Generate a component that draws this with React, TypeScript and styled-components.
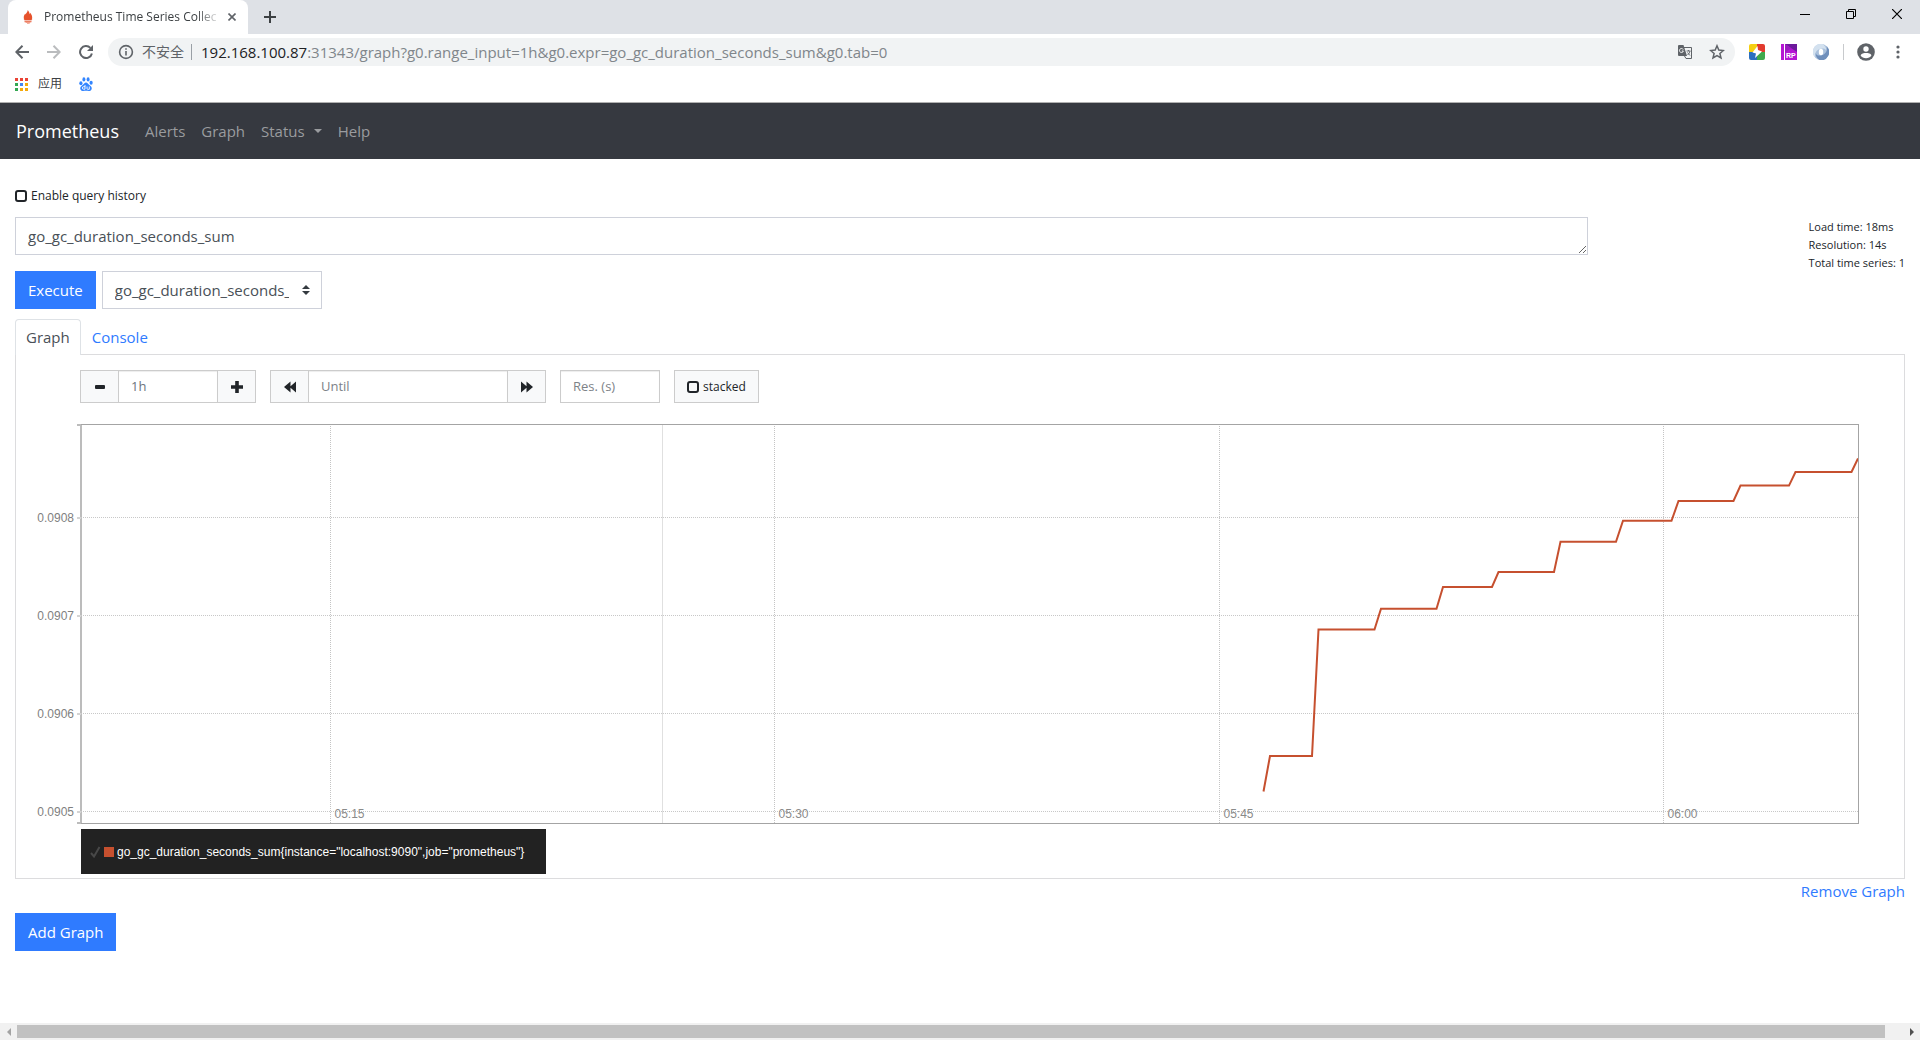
import React, { useState } from "react";
import styled, { createGlobalStyle } from "styled-components";

const ui = '"Open Sans", "Noto Sans CJK SC", sans-serif';
const arial = '"Liberation Sans", Arial, sans-serif';
const blue = "#2f7bff";
const ink = "#212529";
const chromeGrey = "#5f6368";

const GlobalStyle = createGlobalStyle`
  *, *::before, *::after { box-sizing: border-box; }
  body { margin: 0; background: #fff; color: ${ink}; font: 15px/24px ${ui}; }
  button, input, select, textarea { font: inherit; color: inherit; margin: 0; }
  svg { display: block; flex: none; }
  a { text-decoration: none; }
`;

const Window = styled.div`
  display: flex;
  flex-direction: column;
  min-height: 100vh;
`;

/* ---------- browser frame ---------- */

const TabStrip = styled.div`
  display: flex;
  align-items: stretch;
  height: 34px;
  padding-left: 8px;
  background: #dee1e6;
`;

const BrowserTab = styled.div`
  display: flex;
  align-items: center;
  width: 240px;
  padding: 0 8px 0 12px;
  background: #fff;
  border-radius: 8px 8px 0 0;
`;

const TabTitle = styled.span`
  flex: 1;
  margin-left: 8px;
  overflow: hidden;
  white-space: nowrap;
  font-size: 12px;
  line-height: 18px;
  color: #3c4043;
  mask-image: linear-gradient(to right, #000 85%, transparent 98%);
`;

const IconButton = styled.button<{ $w?: number; $color?: string }>`
  display: flex;
  align-items: center;
  justify-content: center;
  flex: none;
  width: ${(p) => p.$w ?? 32}px;
  padding: 0;
  border: 0;
  background: none;
  color: ${(p) => p.$color ?? chromeGrey};
`;

const NewTab = styled(IconButton)`
  margin-left: 6px;
`;

const WindowControls = styled.div`
  display: flex;
  height: 28px;
  margin-left: auto;
`;

const Toolbar = styled.div`
  display: flex;
  align-items: center;
  height: 36px;
  padding: 0 12px 0 6px;
`;

const Omnibox = styled.div`
  display: flex;
  align-items: center;
  flex: 1;
  height: 28px;
  margin: 0 6px;
  padding: 0 2px 0 10px;
  border-radius: 14px;
  background: #f1f3f4;
  font-size: 14px;
  line-height: 20px;
  color: #80868b;
`;

const Insecure = styled.span`
  margin: 0 7px 0 8px;
  color: ${chromeGrey};
`;

const Url = styled.div`
  flex: 1;
  padding-left: 9px;
  outline: 0;
  white-space: nowrap;
  overflow: hidden;
  font-size: 15px;
`;

const Host = styled.span`
  color: #202124;
`;

const VRule = styled.span<{ $color: string }>`
  width: 1px;
  height: 16px;
  background: ${(p) => p.$color};
`;

const Extensions = styled.div`
  display: flex;
  margin-right: 6px;
`;

const Bookmarks = styled.div`
  display: flex;
  align-items: center;
  gap: 17px;
  height: 33px;
  padding: 0 15px 4px;
  border-bottom: 1px solid #b0b0b0;
  font-size: 12px;
  line-height: 18px;
`;

const Bookmark = styled.a`
  display: flex;
  align-items: center;
  gap: 10px;
  color: #3c4043;
`;

/* ---------- page ---------- */

const Navbar = styled.nav`
  display: flex;
  align-items: center;
  gap: 16px;
  height: 56px;
  padding: 0 16px;
  background: #363940;
`;

const Brand = styled.a`
  margin-right: 10px;
  color: #fff;
  font-size: 18px;
  line-height: 30px;
`;

const NavLink = styled.a`
  display: flex;
  align-items: center;
  gap: 9px;
  color: #9a9c9f;
`;

const Caret = styled.span`
  border: 4px solid transparent;
  border-top-color: currentColor;
  border-bottom: 0;
`;

const Main = styled.main`
  flex: 1;
  padding: 28px 15px 32px;
`;

const CheckLabel = styled.label`
  display: flex;
  align-items: center;
  gap: 4px;
  font-size: 12px;
  line-height: 18px;
`;

const CheckBox = styled.input`
  appearance: none;
  width: 12px;
  height: 12px;
  border: 2px solid ${ink};
  border-radius: 3px;
  &:checked { background: ${ink}; }
`;

const QueryRow = styled.div`
  display: grid;
  grid-template-columns: 5fr 1fr;
  gap: 2px;
  margin-top: 12px;
`;

const QueryForm = styled.form`
  display: flex;
  flex-direction: column;
  gap: 16px;
`;

const Expression = styled.textarea`
  display: block;
  width: 100%;
  height: 38px;
  padding: 6px 12px;
  border: 1px solid #ced1da;
  background: #fff;
  color: #495057;
  resize: vertical;
  overflow: hidden;
`;

const Actions = styled.div`
  display: flex;
  gap: 6px;
`;

const PrimaryButton = styled.button`
  height: 38px;
  padding: 0 13px;
  border: 0;
  background: ${blue};
  color: #fff;
`;

const SelectBox = styled.div`
  display: grid;
  align-items: center;
  width: 220px;
  > * { grid-area: 1 / 1; }
  > svg { justify-self: end; margin-right: 12px; pointer-events: none; }
`;

const Select = styled.select`
  appearance: none;
  width: 100%;
  height: 38px;
  padding: 0 32px 0 12px;
  border: 1px solid #ced1da;
  border-radius: 0;
  background: #fff;
  color: #495057;
`;

const Stats = styled.div`
  justify-self: end;
  padding-top: 1px;
  font-size: 11px;
  line-height: 18px;
`;

const Tabs = styled.div`
  display: flex;
  margin-top: 10px;
`;

const Tab = styled.button<{ $active?: boolean }>`
  position: relative;
  height: 36px;
  margin-bottom: -1px;
  padding: 0 10px 2px;
  border: 1px solid ${(p) => (p.$active ? "#dee2e6" : "transparent")};
  border-bottom: 0;
  border-radius: 4px 4px 0 0;
  background: ${(p) => (p.$active ? "#fff" : "none")};
  color: ${(p) => (p.$active ? "#495057" : blue)};
`;

const Panel = styled.section`
  padding: 15px 45px 4px 0;
  border: 1px solid #dcdcde;
`;

const Controls = styled.div`
  display: flex;
  gap: 14px;
  margin-left: 64px;
`;

const GroupButton = styled.button`
  display: flex;
  align-items: center;
  justify-content: center;
  width: 39px;
  border: 1px solid #ccc;
  background: #f8f9fa;
`;

const Field = styled.input<{ $w: number }>`
  width: ${(p) => p.$w}px;
  height: 33px;
  padding: 0 12px 2px;
  border: 1px solid #ccc;
  box-shadow: inset 0 1px 1px rgba(0, 0, 0, 0.075);
  background: #fff;
  font-size: 13px;
  color: #6c757d;
  &::placeholder { color: #7d8287; }
`;

const Group = styled.div`
  display: flex;
  height: 33px;
  ${Field} { margin: 0 -1px; }
`;

const Stacked = styled(CheckLabel)`
  height: 33px;
  padding: 0 12px;
  border: 1px solid #ccc;
  background: #f8f9fa;
`;

const Chart = styled.div`
  display: grid;
  grid-template-columns: 65px 1fr;
  margin-top: 21px;
`;

const YAxis = styled.svg`
  width: 65px;
  height: 400px;
  overflow: visible;
  font: 12px ${arial};
  fill: #7f7f7f;
`;

const Plot = styled.svg`
  width: 100%;
  height: 400px;
  font: 12px ${arial};
  fill: #8a8a8a;
`;

const Legend = styled.div`
  display: inline-flex;
  align-items: center;
  height: 45px;
  margin: 5px 0 0 65px;
  padding: 0 22px 0 9px;
  background: #222;
  color: #fff;
  font: 12px/18px ${arial};
`;

const Swatch = styled.span`
  width: 10px;
  height: 10px;
  margin: 0 3px;
  background: #c6502f;
`;

const RemoveRow = styled.div`
  display: flex;
  justify-content: flex-end;
  margin-bottom: 10px;
`;

const Link = styled.a`
  color: ${blue};
`;

const ScrollBar = styled.div`
  display: flex;
  align-items: center;
  height: 17px;
  background: #f1f1f1;
`;

const Thumb = styled.div`
  flex: 1;
  height: 13px;
  margin-right: 18px;
  background: #c1c1c1;
`;

/* ---------- data ---------- */

const yTicks = [
  { label: "0.0908", y: 93.5 },
  { label: "0.0907", y: 191.5 },
  { label: "0.0906", y: 289.5 },
  { label: "0.0905", y: 387.5 },
];

const xTicks = [
  { label: "05:15", at: 249.5 },
  { label: "05:30", at: 693.5 },
  { label: "05:45", at: 1138.5 },
  { label: "06:00", at: 1582.5 },
];

const PLOT_W = 1778;
const pct = (x: number) => `${(x / PLOT_W) * 100}%`;

const series: [number, number][] = [
  [1182.5, 367.5], [1189, 332], [1231, 332], [1237.5, 205.5], [1293.5, 205.5],
  [1300, 184.8], [1355.5, 184.8], [1362, 163], [1411, 163], [1417.5, 148],
  [1473, 148], [1479.5, 117.8], [1535, 117.8], [1542, 96.8], [1590.5, 96.8],
  [1597.5, 77], [1652.5, 77], [1659.5, 61.6], [1708, 61.6], [1714.5, 48],
  [1770.5, 48], [1777, 34.5],
];

/* ---------- icons ---------- */

const stroke = { fill: "none", stroke: "currentColor" };

const Flame = () => (
  <svg width="16" height="16" viewBox="0 0 16 16" fill="#e6522c">
    <path d="M7.800 1c.8 1.400 1.900 2.500 1.700 4.200.5-.4.600-1 .6-1.500 1.300 1.700 2.700 3.900 1.900 6L11.200 11H4.800L4 9.700c-.7-1.800.1-3.700 1.300-5.200 0 .5.200.8.500 1.100C5.800 4 7.800 3 7.800 1z" />
    <path d="M3.500 9.800h9l-1 1.800h-7zM4.500 12h7v1.300h-7zM5.500 13.600h5c-.6 1.600-4.400 1.600-5 0z" opacity=".75" />
  </svg>
);

const Apps = () => (
  <svg width="13" height="13" viewBox="0 0 13 13">
    {["#ea4335", "#ea4335", "#ea4335", "#34a853", "#4285f4", "#f4a90b", "#34a853", "#f4a90b", "#f4a90b"].map((c, i) => (
      <rect key={i} x={(i % 3) * 5} y={Math.floor(i / 3) * 5} width="3" height="3" fill={c} />
    ))}
  </svg>
);

const Paw = () => (
  <svg width="14" height="14" viewBox="0 0 14 14" fill="#3385ff">
    <ellipse cx="1.900" cy="6.200" rx="1.600" ry="2" />
    <ellipse cx="4.900" cy="2.400" rx="1.500" ry="2.100" />
    <ellipse cx="9.100" cy="2.400" rx="1.500" ry="2.100" />
    <ellipse cx="12.100" cy="5.700" rx="1.600" ry="2" />
    <path d="M7 5.500c1.500 0 2.200 1.500 3.400 2.600 1.500 1.300 2.800 2.200 2.200 4.100-.7 2.300-3.300 1.600-5.600 1.600s-4.900.7-5.600-1.600C.8 10.300 2.100 9.400 3.600 8.100 4.800 7 5.500 5.500 7 5.500z" />
    <path d="M6 8v4.200H4.600a1.200 1.200 0 0 1 0-2.500H6M8 9.500v2q0 .8.800.8h1.500V9.500" fill="none" stroke="#fff" strokeWidth=".9" />
  </svg>
);

const Translate = () => (
  <svg width="14" height="14" viewBox="0 0 14 14">
    <path d="M6 2.500h7.500v11H8L6.500 11" fill="#f1f3f4" stroke={chromeGrey} />
    <path d="M0 1q0-1 1-1h4.500L9 11H1q-1 0-1-1z" fill={chromeGrey} />
    <path d="M5.200 4.500A2 2 0 1 0 5.400 6H3.800" fill="none" stroke="#fff" strokeWidth=".9" />
    <path d="M8.500 6h4M10.500 5v1M12 6q-.5 2.500-2.500 4M9.500 7.500l2.500 3" fill="none" stroke={chromeGrey} strokeWidth=".9" />
  </svg>
);

const Star = () => (
  <svg width="16" height="16" viewBox="0 0 16 16" {...stroke} strokeWidth="1.500">
    <path d="M8 1.800l1.800 4.300 4.600.4-3.500 3 1.100 4.500L8 11.600 4 14l1.100-4.500-3.500-3 4.600-.4z" />
  </svg>
);

const Bolt = () => (
  <svg width="16" height="16" viewBox="0 0 16 16">
    <path d="M2 0h6v8H0V2q0-2 2-2z" fill="#f5cf12" />
    <path d="M8 0h6q2 0 2 2v6H8z" fill="#e23b2e" />
    <path d="M0 8h8v8H2q-2 0-2-2z" fill="#2b6fbf" />
    <path d="M8 8h8v6q0 2-2 2H8z" fill="#3fa94d" />
    <path d="M8.500 2L3.500 8.500l3.500 1L6 14l7-6.500-4-1.500z" fill="#fff" />
  </svg>
);

const Axure = () => (
  <svg width="16" height="16" viewBox="0 0 16 16">
    <path d="M0 0h16v16H0z" fill="#b515d3" />
    <path d="M4 0h12v8L10 4z" fill="#6d1a9c" />
    <path d="M4 0l6 4-6 5z" fill="#9a1bc0" />
    <path d="M3 0h1v16H3z" fill="#fff" />
    <text x="5" y="14" fontSize="7" fontWeight="700" fontFamily={arial} fill="#fff">RP</text>
  </svg>
);

const Swirl = () => (
  <svg width="16" height="16" viewBox="0 0 16 16">
    <circle cx="8" cy="8" r="8" fill="#a9c0dc" />
    <path d="M9.500 0A8 8 0 0 0 2.500 13.800C.8 8.500 4.500 3.800 11 4.500 12.500 5 13 6 13.300 7 13.500 4 12 1.500 9.500 0z" fill="#d3e1ef" />
    <path d="M6.500 16A8 8 0 0 0 13.500 2.200C15.200 7.500 11.500 12.200 5 11.500 3.500 11 3 10 2.700 9 2.500 12 4 14.500 6.500 16z" fill="#6f8fbb" />
    <ellipse cx="8" cy="8" rx="2.200" ry="3.200" fill="#fff" />
  </svg>
);

const Person = () => (
  <svg width="18" height="18" viewBox="0 0 18 18">
    <circle cx="9" cy="9" r="8.800" fill={chromeGrey} />
    <circle cx="9" cy="6" r="2.700" fill="#fff" />
    <path d="M3.600 12.500C4 10.600 7 10 9 10s5 .6 5.400 2.500C13.200 14.300 11.300 15.200 9 15.200s-4.200-.9-5.400-2.700z" fill="#fff" />
  </svg>
);

const Rewind = ({ flip }: { flip?: boolean }) => (
  <svg width="12" height="12" viewBox="0 0 12 12" fill="currentColor">
    <path d={flip ? "M0 .5v11L5.500 6.800v4.700L12 6 5.500.5v4.700z" : "M12 .5v11L6.500 6.800v4.700L0 6 6.500.5v4.700z"} />
  </svg>
);

/* ---------- app ---------- */

export default function App() {
  const [expr, setExpr] = useState("go_gc_duration_seconds_sum");
  return (
    <Window>
      <GlobalStyle />
      <header>
        <TabStrip>
          <BrowserTab>
            <Flame />
            <TabTitle>Prometheus Time Series Collec</TabTitle>
            <IconButton $w={16} aria-label="Close tab">
              <svg width="8" height="8" viewBox="0 0 8 8" {...stroke} strokeWidth="1.600"><path d="M.5.5l7 7m0-7l-7 7" /></svg>
            </IconButton>
          </BrowserTab>
          <NewTab aria-label="New tab" $color="#3c4043">
            <svg width="12" height="12" viewBox="0 0 12 12" {...stroke} strokeWidth="2"><path d="M6 0v12M0 6h12" /></svg>
          </NewTab>
          <WindowControls>
            <IconButton $w={46} $color="#000" aria-label="Minimize">
              <svg width="10" height="10" {...stroke}><path d="M0 5.500h10" /></svg>
            </IconButton>
            <IconButton $w={46} $color="#000" aria-label="Restore">
              <svg width="10" height="10" {...stroke}><path d="M.5 2.500h7v7h-7zM2.500 2.500v-2h7v7h-2" /></svg>
            </IconButton>
            <IconButton $w={46} $color="#000" aria-label="Close">
              <svg width="10" height="10" {...stroke} strokeWidth="1.200"><path d="M0 0l10 10M10 0L0 10" /></svg>
            </IconButton>
          </WindowControls>
        </TabStrip>
        <Toolbar>
          <IconButton aria-label="Back">
            <svg width="14" height="14" viewBox="0 0 14 14" {...stroke} strokeWidth="2"><path d="M14 7H1.500M7.500.8L1.300 7l6.200 6.200" /></svg>
          </IconButton>
          <IconButton aria-label="Forward" $color="#babcbe">
            <svg width="14" height="14" viewBox="0 0 14 14" {...stroke} strokeWidth="2"><path d="M0 7h12.500M6.500.8L12.700 7l-6.200 6.200" /></svg>
          </IconButton>
          <IconButton aria-label="Reload">
            <svg width="14" height="14" viewBox="0 0 14 14">
              <path d="M12.900 8.500A6 6 0 1 1 11.400 2.900" {...stroke} strokeWidth="2" />
              <path d="M14 0v6H8z" fill="currentColor" />
            </svg>
          </IconButton>
          <Omnibox>
            <svg width="16" height="16" viewBox="0 0 16 16" fill="none" stroke={chromeGrey} strokeWidth="1.600">
              <circle cx="8" cy="8" r="6.400" /><path d="M8 7v4.500M8 4.200v1.600" />
            </svg>
            <Insecure>不安全</Insecure>
            <VRule $color="#9aa0a6" />
            <Url role="textbox" aria-label="Address" contentEditable suppressContentEditableWarning spellCheck={false}>
              <Host>192.168.100.87</Host>:31343/graph?g0.range_input=1h&amp;g0.expr=go_gc_duration_seconds_sum&amp;g0.tab=0
            </Url>
            <IconButton aria-label="Translate"><Translate /></IconButton>
            <IconButton aria-label="Bookmark"><Star /></IconButton>
          </Omnibox>
          <Extensions>
            <IconButton aria-label="Bolt extension"><Bolt /></IconButton>
            <IconButton aria-label="Axure RP"><Axure /></IconButton>
            <IconButton aria-label="Formatter"><Swirl /></IconButton>
          </Extensions>
          <VRule $color="#c8cacd" />
          <IconButton $w={44} aria-label="Profile"><Person /></IconButton>
          <IconButton $w={20} aria-label="Menu">
            <svg width="4" height="14" viewBox="0 0 4 14" fill="currentColor"><circle cx="2" cy="2" r="1.600" /><circle cx="2" cy="7" r="1.600" /><circle cx="2" cy="12" r="1.600" /></svg>
          </IconButton>
        </Toolbar>
        <Bookmarks>
          <Bookmark href="#apps"><Apps />应用</Bookmark>
          <Bookmark href="#baidu" aria-label="Baidu"><Paw /></Bookmark>
        </Bookmarks>
      </header>

      <Navbar>
        <Brand href="#home">Prometheus</Brand>
        <NavLink href="#alerts">Alerts</NavLink>
        <NavLink href="#graph">Graph</NavLink>
        <NavLink href="#status">Status<Caret /></NavLink>
        <NavLink href="#help">Help</NavLink>
      </Navbar>

      <Main>
        <CheckLabel>
          <CheckBox type="checkbox" />Enable query history
        </CheckLabel>
        <QueryRow>
          <QueryForm onSubmit={(e) => e.preventDefault()}>
            <Expression aria-label="Expression" rows={1} spellCheck={false} value={expr} onChange={(e) => setExpr(e.target.value)} />
            <Actions>
              <PrimaryButton type="submit">Execute</PrimaryButton>
              <SelectBox>
                <Select aria-label="Metric" defaultValue="go_gc_duration_seconds_sum">
                  <option>go_gc_duration_seconds_sum</option>
                </Select>
                <svg width="8" height="10" viewBox="0 0 8 10" fill="#343a40"><path d="M4 0l4 4H0zM0 6h8l-4 4z" /></svg>
              </SelectBox>
            </Actions>
          </QueryForm>
          <Stats>
            <div>Load time: 18ms</div>
            <div>Resolution: 14s</div>
            <div>Total time series: 1</div>
          </Stats>
        </QueryRow>

        <Tabs role="tablist">
          <Tab role="tab" aria-selected $active>Graph</Tab>
          <Tab role="tab" aria-selected={false}>Console</Tab>
        </Tabs>
        <Panel>
          <Controls>
            <Group>
              <GroupButton aria-label="Shrink range">
                <svg width="10" height="4" fill="currentColor"><rect width="10" height="4" rx="1" /></svg>
              </GroupButton>
              <Field $w={100} name="range" aria-label="Range" defaultValue="1h" />
              <GroupButton aria-label="Grow range">
                <svg width="12" height="12" viewBox="0 0 12 12" fill="currentColor"><path d="M4.200 0h3.600v4.200H12v3.600H7.800V12H4.200V7.800H0V4.200h4.200z" /></svg>
              </GroupButton>
            </Group>
            <Group>
              <GroupButton aria-label="Rewind"><Rewind /></GroupButton>
              <Field $w={200} name="until" aria-label="Until" placeholder="Until" />
              <GroupButton aria-label="Fast forward"><Rewind flip /></GroupButton>
            </Group>
            <Field $w={100} name="res" aria-label="Resolution" placeholder="Res. (s)" />
            <Stacked><CheckBox type="checkbox" />stacked</Stacked>
          </Controls>

          <Chart>
            <YAxis>
              <path d="M61 1h4v398h-4" fill="none" stroke="#bcbcbc" strokeWidth="2" />
              {yTicks.map((t) => (
                <g key={t.label}>
                  <rect x="61" y={t.y - 0.5} width="4" height="2" fill="#d4d4d4" />
                  <text x="58" y={t.y + 4} textAnchor="end">{t.label}</text>
                </g>
              ))}
            </YAxis>
            <Plot role="img" aria-label="go_gc_duration_seconds_sum over the last hour">
              {yTicks.map((t) => (
                <line key={t.label} x1="0" x2="100%" y1={t.y} y2={t.y} stroke="#c8c8c8" strokeDasharray="1 1" />
              ))}
              {xTicks.map((t) => (
                <line key={t.label} x1={pct(t.at)} x2={pct(t.at)} y1="0" y2="400" stroke="#c4c4c4" strokeDasharray="1 1" />
              ))}
              <line x1={pct(581.5)} x2={pct(581.5)} y1="0" y2="400" stroke="#e0e0e0" />
              {xTicks.map((t) => (
                <text key={t.label} x={pct(t.at + 4)} y="394">{t.label}</text>
              ))}
              <svg width="100%" height="400" viewBox={`0 0 ${PLOT_W} 400`} preserveAspectRatio="none">
                <polyline points={series.map((p) => p.join()).join(" ")} fill="none" stroke="#c6502f" strokeWidth="2" vectorEffect="non-scaling-stroke" />
              </svg>
              <rect x="0" y="0" width="100%" height="1" fill="#a4a4a4" />
              <rect x="0" y="399" width="100%" height="1" fill="#a4a4a4" />
              <rect x={pct(PLOT_W - 1)} y="0" width="1" height="400" fill="#a4a4a4" />
            </Plot>
          </Chart>
          <Legend>
            <svg width="11" height="12" viewBox="0 0 11 12" fill="none" stroke="#484848" strokeWidth="2"><path d="M1 7l3 3.500L9.500 1" /></svg>
            <Swatch />
            go_gc_duration_seconds_sum{'{instance="localhost:9090",job="prometheus"}'}
          </Legend>
        </Panel>
        <RemoveRow><Link href="#remove">Remove Graph</Link></RemoveRow>
        <PrimaryButton type="button">Add Graph</PrimaryButton>
      </Main>

      <ScrollBar>
        <IconButton $w={17} $color="#a3a3a3" aria-label="Scroll left">
          <svg width="4" height="8" fill="currentColor"><path d="M4 0v8L0 4z" /></svg>
        </IconButton>
        <Thumb />
        <IconButton $w={17} $color="#505050" aria-label="Scroll right">
          <svg width="4" height="8" fill="currentColor"><path d="M0 0v8l4-4z" /></svg>
        </IconButton>
      </ScrollBar>
    </Window>
  );
}
